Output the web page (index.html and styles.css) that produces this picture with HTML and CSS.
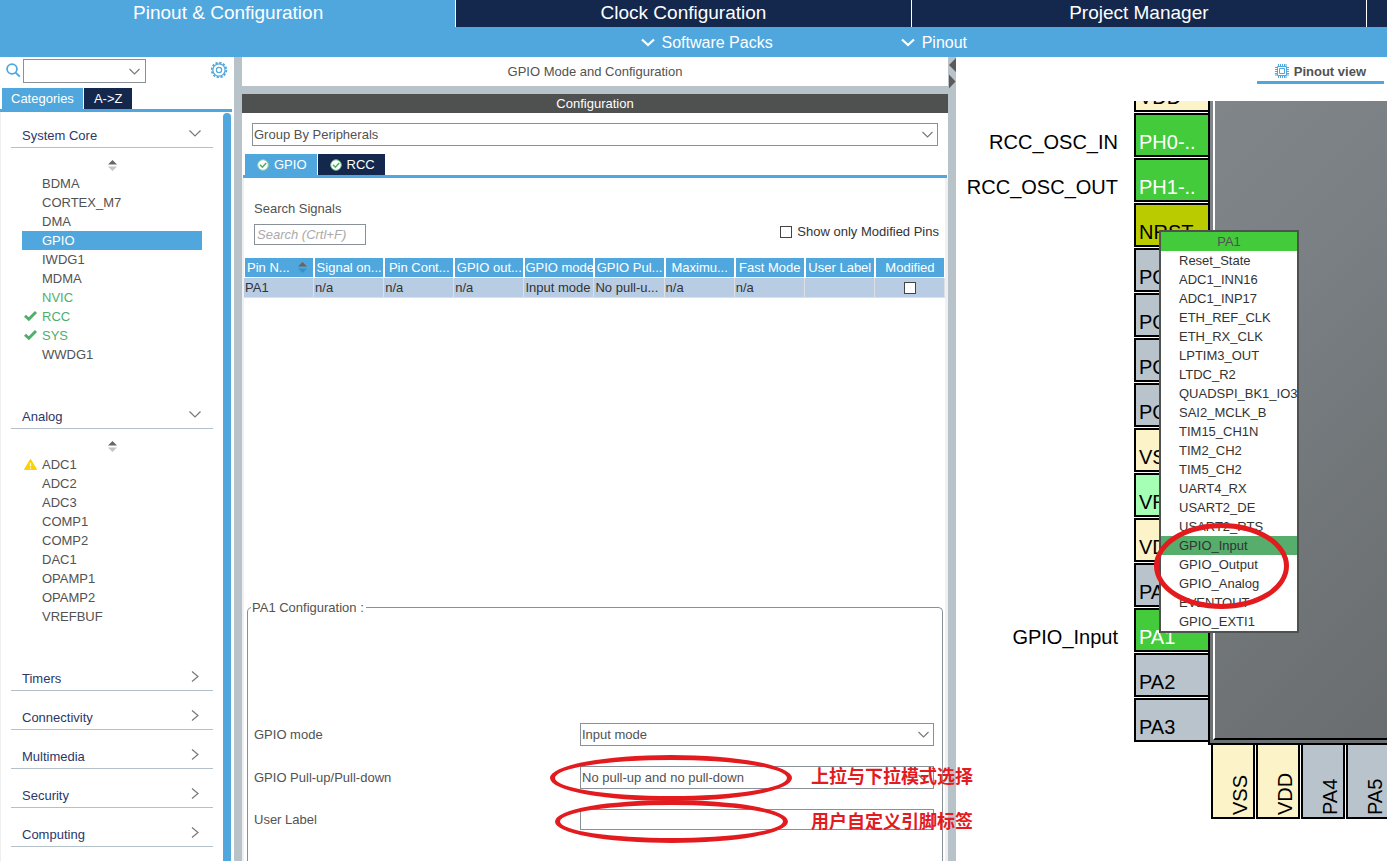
FILE: index.html
```html
<!DOCTYPE html>
<html lang="en">
<head>
<meta charset="utf-8">
<title>Pinout &amp; Configuration</title>
<link rel="stylesheet" href="styles.css">
</head>
<body>
<div class="page">
  <header>
    <nav class="main-tabs">
      <button class="main-tab active">Pinout &amp; Configuration</button>
      <button class="main-tab">Clock Configuration</button>
      <button class="main-tab">Project Manager</button>
      <span class="main-tab"></span>
    </nav>
    <div class="sub-bar">
      <button class="sub-item"><svg width="14" height="9" viewBox="0 0 14 9"><path d="M1 1.5l6 5.500 6-5.500" fill="none" stroke="#fff" stroke-width="2.300"/></svg>Software Packs</button>
      <button class="sub-item"><svg width="14" height="9" viewBox="0 0 14 9"><path d="M1 1.500l6 5.500 6-5.500" fill="none" stroke="#fff" stroke-width="2.300"/></svg>Pinout</button>
    </div>
  </header>

  <main class="workspace">
    <aside class="sidebar">
      <div class="search-row">
        <svg class="search-icon" width="15" height="15" viewBox="0 0 15 15"><circle cx="6" cy="6" r="4.9" fill="none" stroke="#50a7de" stroke-width="1.8"/><path d="M9.6 9.6l4.2 4" stroke="#50a7de" stroke-width="2"/></svg>
        <span class="combo find"><select aria-label="Find peripheral"><option></option></select><svg width="11" height="7" viewBox="0 0 11 7"><path d="M.5 1l5 5 5-5" fill="none" stroke="#777" stroke-width="1.1"/></svg></span>
        <button class="gear" aria-label="Settings"><svg width="18" height="18" viewBox="0 0 18 18" fill="none" stroke="#50a7de"><circle cx="9" cy="9" r="7.3" stroke-width="1.800" stroke-dasharray="2.3 1.52"/><circle cx="9" cy="9" r="6.1" stroke-width="1.2"/><circle cx="9" cy="9" r="2.6" stroke-width="1.2"/></svg></button>
      </div>
      <div class="tabs side-tabs">
        <button class="tab active">Categories</button>
        <button class="tab">A-&gt;Z</button>
      </div>
      <div class="side-body">
        <div class="categories">
          <button class="cat">System Core<svg width="12" height="12" viewBox="0 0 12 12"><path d="M.5 2.5l5.5 5.5 5.5-5.5"/></svg></button>
          <div class="group">
            <svg class="sort" width="9" height="11" viewBox="0 0 9 11"><path d="M4.5 0L9 4.5H0z" fill="#666"/><path d="M4.5 11L9 6.5H0z" fill="#c4c4c4"/></svg>
            <ul>
              <li><button>BDMA</button></li>
              <li><button>CORTEX_M7</button></li>
              <li><button>DMA</button></li>
              <li><button class="selected">GPIO</button></li>
              <li><button>IWDG1</button></li>
              <li><button>MDMA</button></li>
              <li><button class="on">NVIC</button></li>
              <li><button class="on"><svg width="13" height="11" viewBox="0 0 13 11"><path d="M1 4.800l3.800 3.500L12 1" fill="none" stroke="#4fae6c" stroke-width="2.900"/></svg>RCC</button></li>
              <li><button class="on"><svg width="13" height="11" viewBox="0 0 13 11"><path d="M1 4.800l3.800 3.500L12 1" fill="none" stroke="#4fae6c" stroke-width="2.900"/></svg>SYS</button></li>
              <li><button>WWDG1</button></li>
            </ul>
          </div>
          <button class="cat">Analog<svg width="12" height="12" viewBox="0 0 12 12"><path d="M.5 2.5l5.5 5.5 5.5-5.5"/></svg></button>
          <div class="group">
            <svg class="sort" width="9" height="11" viewBox="0 0 9 11"><path d="M4.5 0L9 4.5H0z" fill="#666"/><path d="M4.5 11L9 6.5H0z" fill="#c4c4c4"/></svg>
            <ul>
              <li><button><svg width="13" height="11" viewBox="0 0 13 11"><path d="M6.5.8L12.2 10.3H.8z" fill="#fbd109" stroke="#fbd109" stroke-width="1.4" stroke-linejoin="round"/><path d="M6.5 4v3.2M6.5 8.4v1.3" stroke="#fff" stroke-width="1.3"/></svg>ADC1</button></li>
              <li><button>ADC2</button></li>
              <li><button>ADC3</button></li>
              <li><button>COMP1</button></li>
              <li><button>COMP2</button></li>
              <li><button>DAC1</button></li>
              <li><button>OPAMP1</button></li>
              <li><button>OPAMP2</button></li>
              <li><button>VREFBUF</button></li>
            </ul>
          </div>
          <button class="cat">Timers<svg width="12" height="12" viewBox="0 0 12 12"><path d="M3 .5l6 5-6 5"/></svg></button>
          <button class="cat">Connectivity<svg width="12" height="12" viewBox="0 0 12 12"><path d="M3 .5l6 5-6 5"/></svg></button>
          <button class="cat">Multimedia<svg width="12" height="12" viewBox="0 0 12 12"><path d="M3 .5l6 5-6 5"/></svg></button>
          <button class="cat">Security<svg width="12" height="12" viewBox="0 0 12 12"><path d="M3 .5l6 5-6 5"/></svg></button>
          <button class="cat">Computing<svg width="12" height="12" viewBox="0 0 12 12"><path d="M3 .5l6 5-6 5"/></svg></button>
        </div>
        <div class="scrollbar"></div>
      </div>
    </aside>

    <div class="splitter"></div>

    <section class="config">
      <h1>GPIO Mode and Configuration</h1>
      <h2>Configuration</h2>
      <span class="combo group-by"><select aria-label="Group by"><option>Group By Peripherals</option></select><svg width="11" height="7" viewBox="0 0 11 7"><path d="M.5 1l5 5 5-5" fill="none" stroke="#777" stroke-width="1.1"/></svg></span>
      <div class="tabs config-tabs">
        <button class="tab active"><svg width="12" height="12" viewBox="0 0 12 12"><circle cx="6" cy="6" r="5.3" fill="#fff" stroke="#8fcf9f"/><path d="M3 5.8l2.4 2.4L9.2 4" fill="none" stroke="#4fae6c" stroke-width="1.6"/></svg>GPIO</button>
        <button class="tab"><svg width="12" height="12" viewBox="0 0 12 12"><circle cx="6" cy="6" r="5.3" fill="#fff" stroke="#6fbd88"/><path d="M3 5.8l2.4 2.4L9.2 4" fill="none" stroke="#4fae6c" stroke-width="1.6"/></svg>RCC</button>
      </div>
      <div class="config-body">
        <div class="filter">
          <div class="signal-search">
            <label for="signals">Search Signals</label>
            <input id="signals" type="text" placeholder="Search (Crtl+F)">
          </div>
          <label class="check"><input type="checkbox">Show only Modified Pins</label>
        </div>
        <div class="table-area">
          <table>
            <thead>
              <tr>
                <th class="sorted">Pin N...<svg width="9" height="11" viewBox="0 0 9 11"><path d="M4.5 0L9 4.5H0z" fill="#666"/><path d="M4.5 11L9 6.5H0z" fill="#3c8fc4"/></svg></th>
                <th>Signal on...</th><th>Pin Cont...</th><th>GPIO out...</th><th>GPIO mode</th><th>GPIO Pul...</th><th>Maximu...</th><th>Fast Mode</th><th>User Label</th><th>Modified</th>
              </tr>
            </thead>
            <tbody>
              <tr><td>PA1</td><td>n/a</td><td>n/a</td><td>n/a</td><td>Input mode</td><td>No pull-u...</td><td>n/a</td><td>n/a</td><td></td><td class="modified"><input type="checkbox" aria-label="Modified"></td></tr>
            </tbody>
          </table>
        </div>
        <fieldset>
          <legend>PA1 Configuration :</legend>
          <div class="fields">
            <label for="mode">GPIO mode</label>
            <span class="combo"><select id="mode"><option>Input mode</option></select><svg width="11" height="7" viewBox="0 0 11 7"><path d="M.5 1l5 5 5-5" fill="none" stroke="#777" stroke-width="1.1"/></svg></span>
            <label for="pull">GPIO Pull-up/Pull-down</label>
            <span class="combo"><select id="pull"><option>No pull-up and no pull-down</option></select><svg width="11" height="7" viewBox="0 0 11 7"><path d="M.5 1l5 5 5-5" fill="none" stroke="#777" stroke-width="1.1"/></svg></span>
            <label for="user-label">User Label</label>
            <input id="user-label" type="text">
          </div>
        </fieldset>
      </div>
    </section>

    <div class="splitter arrows">
      <svg width="8" height="32" viewBox="0 0 8 32"><path d="M8 1v14L1 8z M1 17.500v14l6.500-7z" fill="#5a5a5a"/></svg>
    </div>

    <section class="pinout">
      <div class="view-tabs">
        <button class="view-tab"><svg width="14" height="14" viewBox="0 0 14 14" fill="none" stroke="#50a7de"><path d="M2.500 2.500h9v9h-9z M4.500 4.500h5v5h-5z"/><path d="M3.500 0v2M5.500 0v2M7.500 0v2M9.500 0v2M11 0v2M3.500 12v2M5.500 12v2M7.500 12v2M9.500 12v2M11 12v2M0 3.500h2M0 5.500h2M0 7.500h2M0 9.500h2M0 11h2M12 3.500h2M12 5.500h2M12 7.500h2M12 9.500h2M12 11h2"/></svg>Pinout view</button>
      </div>
      <div class="canvas">
        <div class="left-pins">
          <span></span><span class="pin power">VDD</span>
          <span>RCC_OSC_IN</span><span class="pin used">PH0-..</span>
          <span>RCC_OSC_OUT</span><span class="pin used">PH1-..</span>
          <span></span><span class="pin reset">NRST</span>
          <span></span><span class="pin">PC0</span>
          <span></span><span class="pin">PC1</span>
          <span></span><span class="pin">PC2</span>
          <span></span><span class="pin">PC3</span>
          <span></span><span class="pin power">VSS</span>
          <span></span><span class="pin vref">VREF</span>
          <span></span><span class="pin power">VDD</span>
          <span></span><span class="pin">PA0</span>
          <span>GPIO_Input</span><span class="pin used">PA1</span>
          <span></span><span class="pin">PA2</span>
          <span></span><span class="pin">PA3</span>
        </div>
        <div class="chip"><div class="chip-body"></div></div>
        <div class="bottom-pins">
          <span class="pin power"><b>VSS</b></span>
          <span class="pin power"><b>VDD</b></span>
          <span class="pin"><b>PA4</b></span>
          <span class="pin"><b>PA5</b></span>
        </div>
        <div class="menu">
          <div class="menu-title">PA1</div>
          <button>Reset_State</button>
          <button>ADC1_INN16</button>
          <button>ADC1_INP17</button>
          <button>ETH_REF_CLK</button>
          <button>ETH_RX_CLK</button>
          <button>LPTIM3_OUT</button>
          <button>LTDC_R2</button>
          <button>QUADSPI_BK1_IO3</button>
          <button>SAI2_MCLK_B</button>
          <button>TIM15_CH1N</button>
          <button>TIM2_CH2</button>
          <button>TIM5_CH2</button>
          <button>UART4_RX</button>
          <button>USART2_DE</button>
          <button>USART2_RTS</button>
          <button class="current">GPIO_Input</button>
          <button>GPIO_Output</button>
          <button>GPIO_Analog</button>
          <button>EVENTOUT</button>
          <button>GPIO_EXTI1</button>
        </div>
        <div class="ring ring-menu"></div>
      </div>
    </section>
  </main>

  <div class="ring ring-pull"></div>
  <div class="ring ring-label"></div>
  <div class="note note-pull" lang="zh">上拉与下拉模式选择</div>
  <div class="note note-label" lang="zh">用户自定义引脚标签</div>
</div>
</body>
</html>
```
FILE: styles.css
```css
:root {
  --blue: #50a7de;
  --navy: #14284d;
  --bar: #b7c2c9;
  --dark: #4f5150;
  --red: #e31b1f;
  --line: #8a9097;
}

* { box-sizing: border-box; }

body {
  margin: 0;
  background: #fff;
  color: #525252;
  font: 13px/19px "Liberation Sans", Arial, sans-serif;
}

button, input, select { font: inherit; color: inherit; }
button { border: 0; padding: 0; background: none; text-align: left; white-space: nowrap; }
svg { display: block; flex: none; }

.page {
  position: relative;
  display: flex;
  flex-direction: column;
  height: 100vh;
  overflow: hidden;
}

/* Header */
.main-tabs {
  display: grid;
  grid-template-columns: 1fr 1fr 1fr 21px;
  height: 27px;
}
.main-tab {
  background: var(--navy);
  border-left: 1px solid #fff;
  color: #fff;
  font-size: 19px;
  line-height: 25px;
  padding-bottom: 2px;
  text-align: center;
}
.main-tab.active { background: var(--blue); border-color: var(--blue); }

.sub-bar {
  display: flex;
  gap: 128px;
  height: 30px;
  padding-left: calc(50% - 53px);
  background: var(--blue);
}
.sub-item {
  display: flex;
  align-items: center;
  gap: 7px;
  color: #fff;
  font-size: 16px;
}

.workspace {
  flex: 1;
  min-height: 0;
  display: grid;
  grid-template-columns: 234px 8px minmax(0, 706fr) 8px minmax(0, 431fr);
}
.splitter { background: var(--bar); }

/* Shared controls */
.combo { position: relative; display: block; height: 23px; }
.combo select {
  display: block;
  width: 100%;
  height: 100%;
  appearance: none;
  border: 1px solid var(--line);
  border-radius: 0;
  background: #fff;
  padding: 0 24px 0 1px;
}
.combo svg { position: absolute; right: 5px; top: 8px; pointer-events: none; }

input[type="text"] {
  height: 21px;
  border: 1px solid var(--line);
  padding: 0 2px;
  background: #fff;
}
input[type="checkbox"] {
  appearance: none;
  width: 12px;
  height: 12px;
  margin: 0;
  border: 1px solid #444;
  background: #fff;
}
.tabs { display: flex; gap: 1px; height: 24px; border-bottom: 3px solid var(--blue); }
.tab {
  display: flex;
  align-items: center;
  background: var(--navy);
  color: #fff;
  padding: 0 10px;
}
.tab.active { background: var(--blue); }

/* Sidebar */
.sidebar { display: flex; flex-direction: column; min-height: 0; }
.search-row {
  display: flex;
  align-items: center;
  height: 31px;
  padding: 0 6px 4px 6px;
}
.find { width: 123px; height: 24px; margin-left: 2px; }
.find svg { right: 6px; top: 9px; }
.gear { margin-left: auto; padding-bottom: 2px; }
.side-tabs { padding-left: 2px; margin-right: 2px; }
.side-tabs .active { padding: 0 9px; }
.side-body { display: flex; flex: 1; min-height: 0; overflow: hidden; border-left: 1px solid #eee; }
.categories { flex: 1; padding: 10px 10px 0; }
.scrollbar {
  width: 8px;
  margin: 1px 3px 0 0;
  border-radius: 4px 4px 0 0;
  background: var(--blue);
}
.cat {
  display: flex;
  align-items: center;
  justify-content: space-between;
  width: 100%;
  height: 26px;
  padding: 2px 12px 0 11px;
  border-bottom: 1px solid #b4c0c9;
  color: #2c3768;
}
.cat ~ .cat { margin-top: 13px; }
.cat svg { margin-bottom: 4px; fill: none; stroke: #777; stroke-width: 1.2; }
.group { padding: 12px 11px 26px; }
.sort { margin: 0 auto 3px; }
.group ul { list-style: none; margin: 0; padding: 0; }
.group li button {
  display: flex;
  align-items: center;
  width: 100%;
  height: 19px;
  padding-left: 20px;
}
.group li svg { margin: 0 5px 0 -18px; }
.group .selected { background: var(--blue); color: #fff; }
.group .on { color: #4fae6c; }

/* Configuration panel */
.config { display: flex; flex-direction: column; min-height: 0; }
h1, h2 { margin: 0; font-size: 13px; font-weight: normal; text-align: center; }
h1 { line-height: 29px; border-bottom: 8px solid var(--bar); }
h2 { background: var(--dark); color: #fff; line-height: 19px; }
.group-by { margin: 10px 10px 8px; }
.config-tabs { margin: 0 1px; padding-left: 2px; }
.config-tabs .tab { gap: 5px; padding: 0 10px 0 12px; }
.config-body {
  display: flex;
  flex-direction: column;
  flex: 1;
  min-height: 0;
  border: solid #eef0f2;
  border-width: 0 3px 0 2px;
}
.filter {
  display: flex;
  justify-content: space-between;
  align-items: flex-end;
  padding: 21px 6px 13px 10px;
}
.signal-search { display: flex; flex-direction: column; gap: 6px; width: 112px; }
.signal-search input::placeholder { color: #aaa; font-style: italic; opacity: 1; }
.check { display: flex; align-items: center; gap: 5px; color: #333; padding-bottom: 4px; }
.table-area { flex: 1; min-height: 0; }
table { width: 100%; table-layout: fixed; border-collapse: separate; border-spacing: 0; }
th, td { height: 20px; padding: 0; line-height: 19px; white-space: nowrap; }
th {
  background: var(--blue);
  border: solid #fff;
  border-width: 0 1px 1px;
  color: #fff;
  font-weight: normal;
}
th.sorted { display: flex; align-items: center; justify-content: space-between; padding: 0 6px 0 2px; }
td {
  background: #b8cce4;
  border: solid #dcdfe5;
  border-width: 0 1px 1px 0;
  color: #333;
  padding-left: 1px;
}
.modified input { display: block; margin: 0 auto; }

fieldset {
  margin: 0 2px 0 3px;
  padding: 0 8px 0 6px;
  min-width: 0;
  border: 1px solid var(--line);
  border-bottom: 0;
  border-radius: 5px 5px 0 0;
}
legend { padding: 0 2px 0 1px; line-height: 15px; margin-left: -3px; }
.fields {
  display: grid;
  grid-template-columns: 326fr 354fr;
  row-gap: 20px;
  padding: 108px 0 31px;
  align-items: center;
}

/* Pinout view */
.pinout { display: flex; flex-direction: column; min-height: 0; }
.view-tabs { display: flex; justify-content: flex-end; padding: 0 3px 17px; }
.view-tab {
  display: flex;
  align-items: center;
  gap: 5px;
  height: 27px;
  padding: 4px 18px 0;
  border-bottom: 3px solid var(--blue);
  font-weight: bold;
}
.canvas {
  position: relative;
  flex: 1;
  min-height: 0;
  overflow: hidden;
  color: #000;
  font-size: 20px;
  line-height: 26px;
}
.left-pins {
  position: absolute;
  left: 0;
  top: -33px;
  display: grid;
  grid-template-columns: 162px 76px;
  grid-auto-rows: 44px;
  gap: 1px 16px;
}
.left-pins span {
  display: flex;
  align-items: flex-end;
  justify-content: flex-end;
  padding-bottom: 2px;
}
.left-pins .pin { justify-content: flex-start; padding: 0 0 0 3px; }
.pin { border: 2px solid #000; background: #b8c3cb; }
.power { background: #fdf3c8; }
.used { background: #43cb3c; color: #fff; }
.reset { background: #bacb00; }
.vref { background: #a5ffb5; }
.chip {
  position: absolute;
  left: 252px;
  right: 0;
  top: 0;
  height: 644px;
  padding: 0 0 3px 3px;
  border: solid #000;
  border-width: 0 0 2px 2px;
  background: linear-gradient(#80868b, #6c7173);
}
.chip-body {
  height: 100%;
  border-left: 2px solid #fff;
  border-bottom: 2px solid #000;
  background: linear-gradient(135deg, #7f8588, #7b8085 30%, #72777a 60%, #696d6f);
}
.bottom-pins { position: absolute; left: 255px; top: 644px; display: flex; gap: 1px; }
.bottom-pins .pin {
  display: flex;
  justify-content: flex-end;
  width: 44px;
  height: 74px;
  border-top: 0;
}
.bottom-pins b { font-weight: normal; writing-mode: vertical-rl; transform: rotate(180deg); padding-top: 2px; }

.menu {
  position: absolute;
  left: 203px;
  top: 129px;
  width: 140px;
  border: 2px solid var(--dark);
  background: #fff;
  color: #333;
  font-size: 13px;
  line-height: 19px;
}
.menu-title { background: #43cb3c; color: #525252; text-align: center; }
.menu button { display: block; width: 100%; height: 19px; padding-left: 18px; }
.menu .current { background: #56ad6c; }

/* Annotations over the panels */
.ring { position: absolute; border: 5px solid var(--red); border-radius: 50%; pointer-events: none; }
.ring-menu { left: 198px; top: 422px; width: 135px; height: 86px; }
.ring-pull { left: 550px; top: 755px; width: 242px; height: 46px; }
.ring-label { left: 555px; top: 800px; width: 233px; height: 43px; }
.note {
  position: absolute;
  left: 811px;
  color: var(--red);
  font: bold 18px/24px "Liberation Sans", "Noto Sans CJK SC", sans-serif;
  white-space: nowrap;
}
.note-pull { top: 765px; }
.note-label { top: 810px; }
```
